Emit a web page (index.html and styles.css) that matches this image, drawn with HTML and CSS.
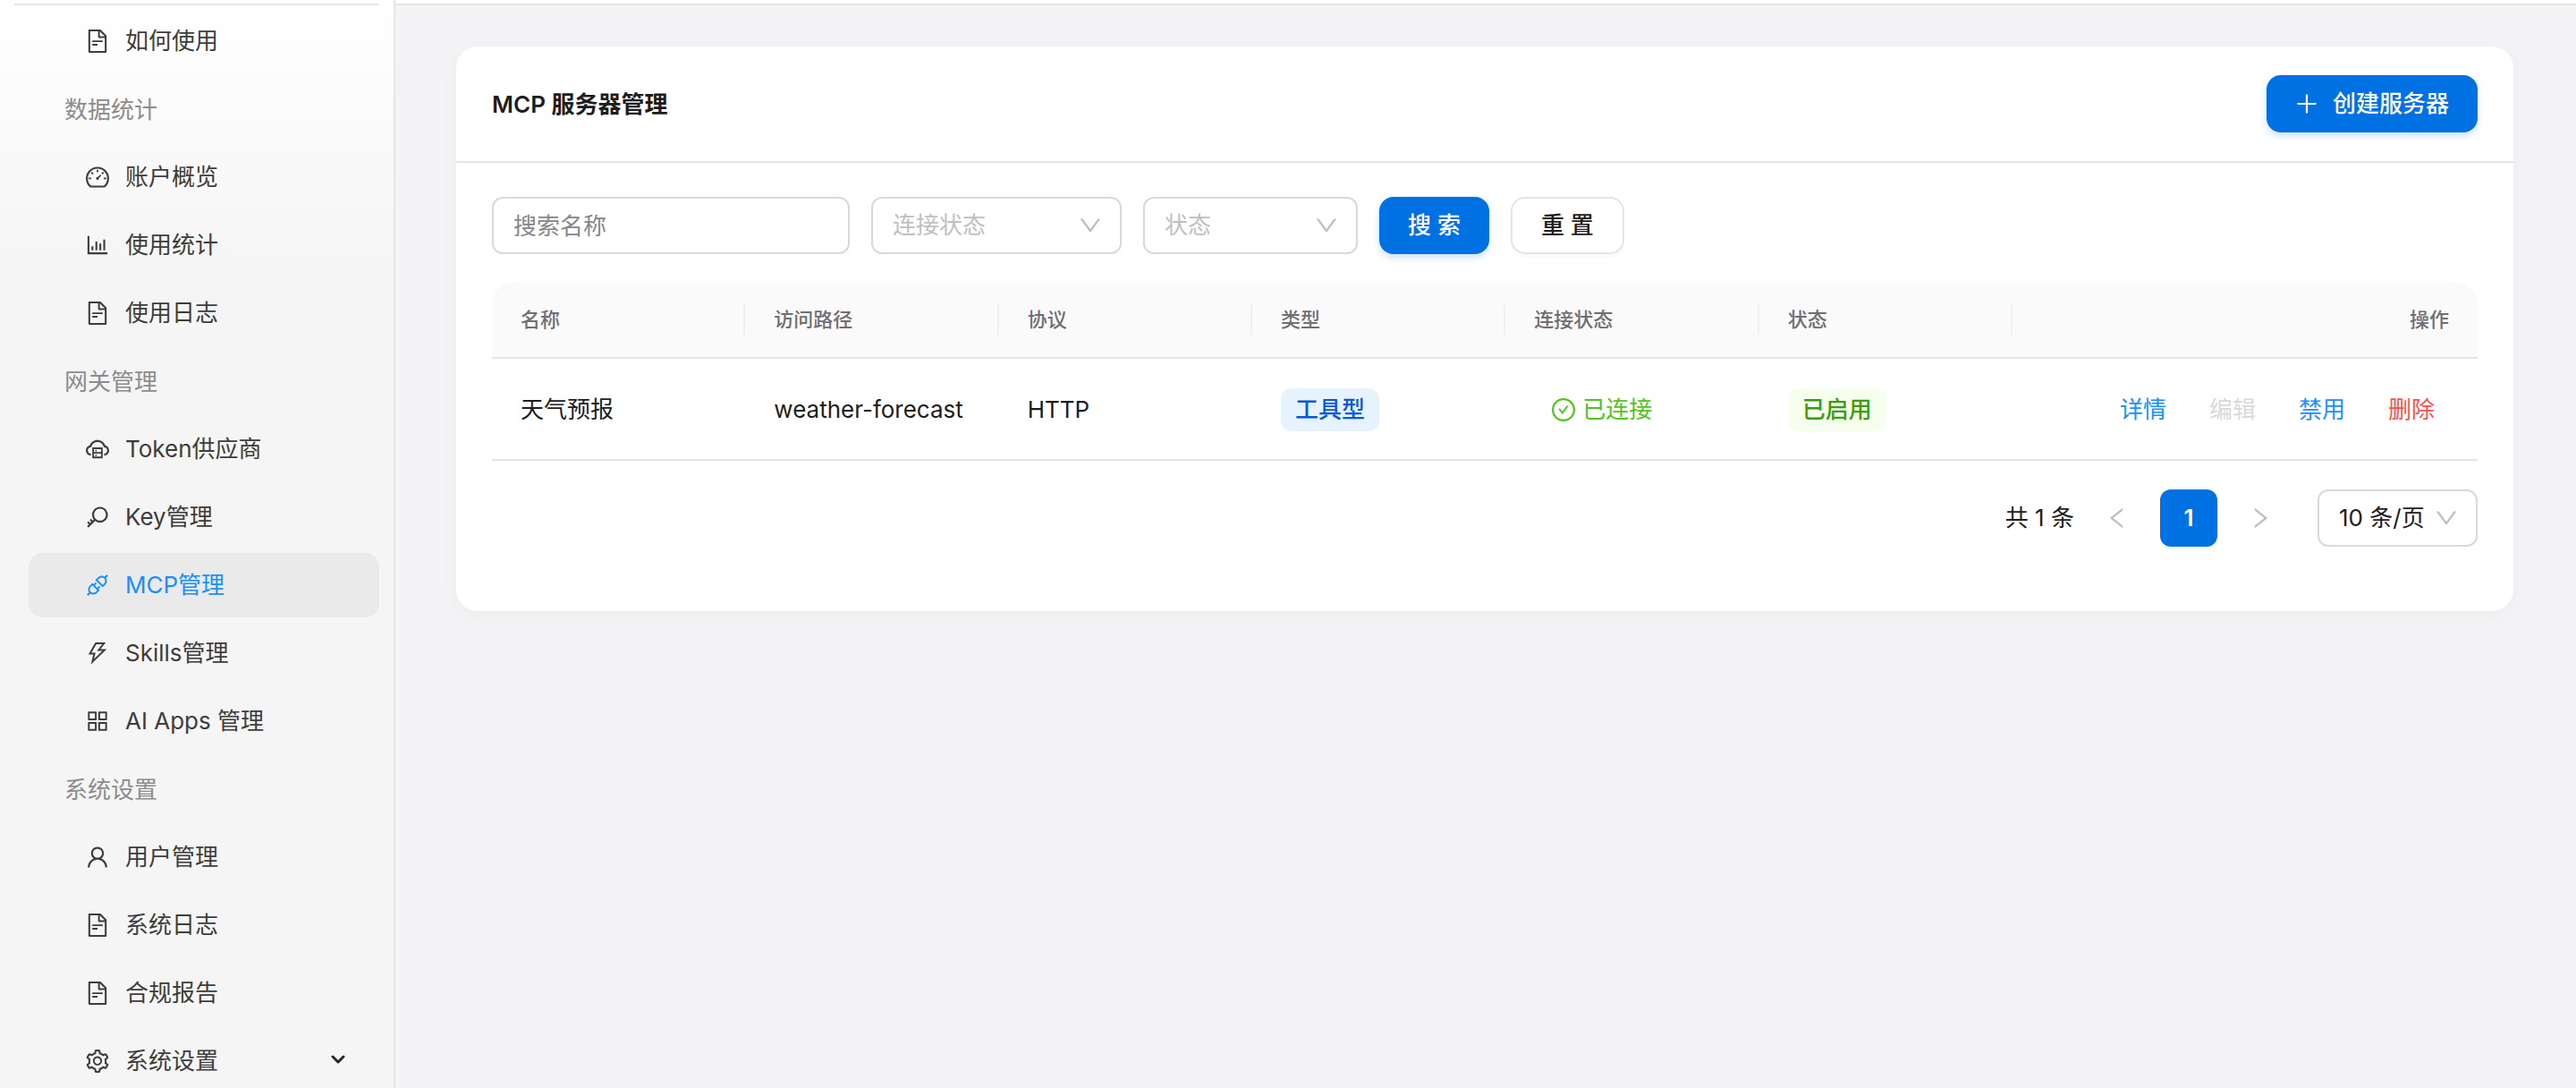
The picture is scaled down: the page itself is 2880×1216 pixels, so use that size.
FILE: index.html
```
<!DOCTYPE html>
<html lang="zh-CN">
<head>
    <meta charset="UTF-8">
    <title>MCP 服务器管理</title>
    <link rel="stylesheet" href="styles.css">
</head>
<body>
    <!-- 图标 -->
    <svg class="sprite" aria-hidden="true">
        <symbol id="i-file" viewBox="64 64 896 896"><path d="M854.6 288.6L639.4 73.4c-6-6-14.1-9.4-22.6-9.4H192c-17.7 0-32 14.3-32 32v832c0 17.7 14.3 32 32 32h640c17.7 0 32-14.3 32-32V311.3c0-8.5-3.4-16.7-9.4-22.7zM790.2 326H602V137.8L790.2 326zm1.8 562H232V136h302v216a42 42 0 0042 42h216v494zM504 618H320c-4.4 0-8 3.6-8 8v48c0 4.4 3.6 8 8 8h184c4.4 0 8-3.6 8-8v-48c0-4.4-3.6-8-8-8zM312 490v48c0 4.4 3.6 8 8 8h384c4.4 0 8-3.6 8-8v-48c0-4.4-3.6-8-8-8H320c-4.4 0-8 3.6-8 8z"/></symbol>
        <symbol id="i-dashboard" viewBox="64 64 896 896"><path d="M924.8 385.6a446.7 446.7 0 00-96-142.4 446.7 446.7 0 00-142.4-96C631.1 123.8 572.5 112 512 112s-119.1 11.8-174.4 35.2a446.7 446.7 0 00-142.4 96 446.7 446.7 0 00-96 142.4C75.8 440.9 64 499.5 64 560c0 132.7 58.3 257.7 159.9 343.1l1.7 1.4c5.8 4.8 13.1 7.5 20.6 7.5h531.7c7.5 0 14.8-2.7 20.6-7.5l1.7-1.4C901.7 817.7 960 692.7 960 560c0-60.5-11.9-119.1-35.2-174.4zM761.4 836H262.6A371.12 371.12 0 01140 560c0-99.4 38.7-192.8 109-263 70.3-70.3 163.7-109 263-109 99.4 0 192.8 38.7 263 109 70.3 70.3 109 163.7 109 263 0 105.6-44.5 205.5-122.6 276zM623.5 421.5a8.03 8.03 0 00-11.3 0L527.7 506c-18.7-5-39.4-.2-54.1 14.5a55.95 55.95 0 000 79.2 55.95 55.95 0 0079.2 0 55.87 55.87 0 0014.5-54.1l84.5-84.5c3.1-3.1 3.1-8.2 0-11.3l-28.3-28.3zM490 320h44c4.4 0 8-3.6 8-8v-80c0-4.4-3.6-8-8-8h-44c-4.4 0-8 3.6-8 8v80c0 4.4 3.6 8 8 8zm260 218v44c0 4.4 3.6 8 8 8h80c4.4 0 8-3.6 8-8v-44c0-4.4-3.6-8-8-8h-80c-4.4 0-8 3.6-8 8zm12.7-197.2l-31.1-31.1a8.03 8.03 0 00-11.3 0l-56.6 56.6a8.03 8.03 0 000 11.3l31.1 31.1c3.1 3.1 8.2 3.1 11.3 0l56.6-56.6c3.1-3.1 3.1-8.2 0-11.3zm-458.6-31.1a8.03 8.03 0 00-11.3 0l-31.1 31.1a8.03 8.03 0 000 11.3l56.6 56.6c3.1 3.1 8.2 3.1 11.3 0l31.1-31.1c3.1-3.1 3.1-8.2 0-11.3l-56.6-56.6zM262 530h-80c-4.4 0-8 3.6-8 8v44c0 4.4 3.6 8 8 8h80c4.4 0 8-3.6 8-8v-44c0-4.4-3.6-8-8-8z"/></symbol>
        <symbol id="i-chart" viewBox="64 64 896 896"><path d="M888 792H200V168c0-4.4-3.6-8-8-8h-56c-4.4 0-8 3.6-8 8v688c0 4.4 3.6 8 8 8h752c4.4 0 8-3.6 8-8v-56c0-4.4-3.6-8-8-8zm-600-80h56c4.4 0 8-3.6 8-8V560c0-4.4-3.6-8-8-8h-56c-4.4 0-8 3.6-8 8v144c0 4.4 3.6 8 8 8zm152 0h56c4.4 0 8-3.6 8-8V384c0-4.4-3.6-8-8-8h-56c-4.4 0-8 3.6-8 8v320c0 4.4 3.6 8 8 8zm152 0h56c4.4 0 8-3.6 8-8V462c0-4.4-3.6-8-8-8h-56c-4.4 0-8 3.6-8 8v242c0 4.4 3.6 8 8 8zm152 0h56c4.4 0 8-3.6 8-8V304c0-4.4-3.6-8-8-8h-56c-4.4 0-8 3.6-8 8v400c0 4.4 3.6 8 8 8z"/></symbol>
        <symbol id="i-cloud" viewBox="64 64 896 896"><path d="M704 446H320c-4.4 0-8 3.6-8 8v402c0 4.4 3.6 8 8 8h384c4.4 0 8-3.6 8-8V454c0-4.4-3.6-8-8-8zm-328 64h272v117H376V510zm272 290H376V683h272v117z"/><path d="M424 748a32 32 0 1064 0 32 32 0 10-64 0zm0-178a32 32 0 1064 0 32 32 0 10-64 0z"/><path d="M811.4 368.9C765.6 248 648.9 162 512.2 162S258.8 247.9 213 368.8C126.9 391.5 63.5 470.2 64 563.6 64.6 668 145.6 752.9 247.6 762c4.7.4 8.7-3.3 8.7-8v-60.4c0-4-3-7.4-7-7.9-27-3.4-52.5-15.2-72.1-34.5-24-23.5-37.2-55.1-37.2-88.6 0-28 9.1-54.4 26.2-76.4 16.7-21.4 40.2-36.9 66.1-43.7l37.9-10 13.9-36.7c8.6-22.8 20.6-44.2 35.7-63.5 14.9-19.2 32.6-36 52.4-50 41.1-28.9 89.5-44.2 140-44.2s98.9 15.3 140 44.3c19.9 14 37.5 30.8 52.4 50 15.1 19.3 27.1 40.7 35.7 63.5l13.8 36.6 37.8 10c54.2 14.4 92.1 63.7 92.1 120 0 33.6-13.2 65.1-37.2 88.6-19.5 19.2-44.9 31.1-71.9 34.5-4 .5-6.9 3.9-6.9 7.9V754c0 4.7 4.1 8.4 8.8 8 101.7-9.2 182.5-94 183.2-198.2.6-93.4-62.7-172.1-148.6-194.9z"/></symbol>
        <symbol id="i-key" viewBox="64 64 896 896"><path d="M608 112c-167.9 0-304 136.1-304 304 0 70.3 23.9 135 63.9 186.5l-41.1 41.1-62.3-62.3a8.15 8.15 0 00-11.4 0l-39.8 39.8a8.15 8.15 0 000 11.4l62.3 62.3-44.9 44.9-62.3-62.3a8.15 8.15 0 00-11.4 0l-39.8 39.8a8.15 8.15 0 000 11.4l62.3 62.3-65.3 65.3a8.03 8.03 0 000 11.3l42.3 42.3c3.1 3.1 8.2 3.1 11.3 0l253.6-253.6A304.06 304.06 0 00608 720c167.9 0 304-136.1 304-304S775.9 112 608 112zm161.2 465.2C726.2 620.3 668.9 644 608 644c-60.9 0-118.2-23.7-161.2-66.8-43.1-43-66.8-100.3-66.8-161.2 0-60.9 23.7-118.2 66.8-161.2 43-43.1 100.3-66.8 161.2-66.8 60.9 0 118.2 23.7 161.2 66.8 43.1 43 66.8 100.3 66.8 161.2 0 60.9-23.7 118.2-66.8 161.2z"/></symbol>
        <symbol id="i-api" viewBox="64 64 896 896"><path d="M917.7 148.8l-42.4-42.4c-1.6-1.6-3.6-2.3-5.7-2.3s-4.1.8-5.7 2.3l-76.1 76.1a199.27 199.27 0 00-112.1-34.3c-51.2 0-102.4 19.5-141.5 58.6L432.3 308.7a8.03 8.03 0 000 11.3L704 591.7c1.6 1.6 3.6 2.3 5.7 2.3 2 0 4.1-.8 5.7-2.3l101.9-101.9c68.9-69 77-175.7 24.3-253.5l76.1-76.1c3.1-3.2 3.1-8.3 0-11.4zM769.1 441.7l-59.4 59.4-186.8-186.8 59.4-59.4c24.9-24.9 58.1-38.7 93.4-38.7 35.3 0 68.4 13.7 93.4 38.7 24.9 24.9 38.7 58.1 38.7 93.4 0 35.3-13.8 68.4-38.7 93.4zm-190.2 105a8.03 8.03 0 00-11.3 0L501 613.3 410.7 523l66.7-66.7c3.1-3.1 3.1-8.2 0-11.3L441 408.6a8.03 8.03 0 00-11.3 0L363 475.3l-43-43a7.85 7.85 0 00-5.7-2.3c-2 0-4.1.8-5.7 2.3L206.8 534.2c-68.9 69-77 175.7-24.3 253.5l-76.1 76.1a8.03 8.03 0 000 11.3l42.4 42.4c1.6 1.6 3.6 2.3 5.7 2.3s4.1-.8 5.7-2.3l76.1-76.1c33.7 22.9 72.9 34.3 112.1 34.3 51.2 0 102.4-19.5 141.5-58.6l101.9-101.9c3.1-3.1 3.1-8.2 0-11.3l-43-43 66.7-66.7c3.1-3.1 3.1-8.2 0-11.3l-36.6-36.2zM441.7 769.1a131.32 131.32 0 01-93.4 38.7c-35.3 0-68.4-13.7-93.4-38.7a131.32 131.32 0 01-38.7-93.4c0-35.3 13.7-68.4 38.7-93.4l59.4-59.4 186.8 186.8-59.4 59.4z"/></symbol>
        <symbol id="i-bolt" viewBox="64 64 896 896"><path d="M848 359.3H627.7L825.8 109c4.1-5.3.4-13-6.3-13H436c-2.8 0-5.5 1.5-6.9 4L170 547.5c-3.1 5.3.7 12 6.9 12h174.4l-89.4 357.6c-1.9 7.8 7.5 13.3 13.3 7.7L853.5 373c5.2-4.9 1.7-13.7-5.5-13.7zM378.2 732.5l60.3-241H281.1l189.6-327.4h224.6L487 427.4h211L378.2 732.5z"/></symbol>
        <symbol id="i-apps" viewBox="64 64 896 896"><path d="M464 144H160c-8.8 0-16 7.2-16 16v304c0 8.8 7.2 16 16 16h304c8.8 0 16-7.2 16-16V160c0-8.8-7.2-16-16-16zm-52 268H212V212h200v200zm452-268H560c-8.8 0-16 7.2-16 16v304c0 8.8 7.2 16 16 16h304c8.8 0 16-7.2 16-16V160c0-8.8-7.2-16-16-16zm-52 268H612V212h200v200zM464 544H160c-8.8 0-16 7.2-16 16v304c0 8.8 7.2 16 16 16h304c8.8 0 16-7.2 16-16V560c0-8.8-7.2-16-16-16zm-52 268H212V612h200v200zm452-268H560c-8.8 0-16 7.2-16 16v304c0 8.8 7.2 16 16 16h304c8.8 0 16-7.2 16-16V560c0-8.8-7.2-16-16-16zm-52 268H612V612h200v200z"/></symbol>
        <symbol id="i-user" viewBox="64 64 896 896"><path d="M858.5 763.6a374 374 0 00-80.6-119.5 375.63 375.63 0 00-119.5-80.6c-.4-.2-.8-.3-1.2-.5C719.5 518 760 444.7 760 362c0-137-111-248-248-248S264 225 264 362c0 82.7 40.5 156 102.8 201.1-.4.2-.8.3-1.2.5-44.8 18.9-85 46-119.5 80.6a375.63 375.63 0 00-80.6 119.5A371.7 371.7 0 00136 901.8a8 8 0 008 8.2h60c4.4 0 7.9-3.5 8-7.8 2-77.2 33-149.5 87.8-204.3 56.7-56.7 132-87.9 212.2-87.9s155.5 31.2 212.2 87.9C779 752.7 810 825 812 902.2c.1 4.4 3.6 7.8 8 7.8h60a8 8 0 008-8.2c-1-47.8-10.9-94.3-29.5-138.2zM512 534c-45.9 0-89.1-17.9-121.6-50.4S340 407.9 340 362c0-45.9 17.9-89.1 50.4-121.6S466.1 190 512 190s89.1 17.9 121.6 50.4S684 316.1 684 362c0 45.9-17.9 89.1-50.4 121.6S557.9 534 512 534z"/></symbol>
        <symbol id="i-setting" viewBox="64 64 896 896"><path d="M924.8 625.7l-65.5-56c3.1-19 4.7-38.4 4.7-57.8s-1.6-38.8-4.7-57.8l65.5-56a32.03 32.03 0 009.3-35.2l-.9-2.6a443.74 443.74 0 00-79.7-137.9l-1.8-2.1a32.12 32.12 0 00-35.1-9.5l-81.3 28.9c-30-24.6-63.5-44-99.7-57.6l-15.7-85a32.05 32.05 0 00-25.8-25.7l-2.7-.5c-52.1-9.4-106.9-9.4-159 0l-2.7.5a32.05 32.05 0 00-25.8 25.7l-15.8 85.4a351.86 351.86 0 00-99 57.4l-81.9-29.1a32 32 0 00-35.1 9.5l-1.8 2.1a446.02 446.02 0 00-79.7 137.9l-.9 2.6c-4.5 12.5-.8 26.5 9.3 35.2l66.3 56.6c-3.1 18.8-4.6 38-4.6 57.1 0 19.2 1.5 38.4 4.6 57.1L99 625.5a32.03 32.03 0 00-9.3 35.2l.9 2.6c18.1 50.4 44.9 96.9 79.7 137.9l1.8 2.1a32.12 32.12 0 0035.1 9.5l81.9-29.1c29.8 24.5 63.1 43.9 99 57.4l15.8 85.4a32.05 32.05 0 0025.8 25.7l2.7.5a449.4 449.4 0 00159 0l2.7-.5a32.05 32.05 0 0025.8-25.7l15.7-85a350 350 0 0099.7-57.6l81.3 28.9a32 32 0 0035.1-9.5l1.8-2.1c34.8-41.1 61.6-87.5 79.7-137.9l.9-2.6c4.5-12.3.8-26.3-9.3-35zM788.3 465.9c2.5 15.1 3.8 30.6 3.8 46.1s-1.3 31-3.8 46.1l-6.6 40.1 74.7 63.9a370.03 370.03 0 01-42.6 73.6L721 702.8l-31.4 25.8c-23.9 19.6-50.5 35-79.3 45.8l-38.1 14.3-17.9 97a377.5 377.5 0 01-85 0l-17.9-97.2-37.8-14.5c-28.5-10.8-55-26.2-78.7-45.7l-31.4-25.9-93.4 33.2c-17-22.9-31.2-47.6-42.6-73.6l75.5-64.5-6.5-40c-2.4-14.9-3.7-30.3-3.7-45.5 0-15.3 1.2-30.6 3.7-45.5l6.5-40-75.5-64.5c11.3-26.1 25.6-50.7 42.6-73.6l93.4 33.2 31.4-25.9c23.7-19.5 50.2-34.9 78.7-45.7l37.9-14.3 17.9-97.2c28.1-3.2 56.8-3.2 85 0l17.9 97 38.1 14.3c28.7 10.8 55.4 26.2 79.3 45.8l31.4 25.8 92.8-32.9c17 22.9 31.2 47.6 42.6 73.6L781.8 426l6.5 39.9zM512 326c-97.2 0-176 78.8-176 176s78.8 176 176 176 176-78.8 176-176-78.8-176-176-176zm79.2 255.2A111.6 111.6 0 01512 614c-29.9 0-58-11.7-79.2-32.8A111.6 111.6 0 01400 502c0-29.9 11.7-58 32.8-79.2C454 401.6 482.1 390 512 390c29.9 0 58 11.6 79.2 32.8A111.6 111.6 0 01624 502c0 29.9-11.7 58-32.8 79.2z"/></symbol>
        <symbol id="i-plus" viewBox="64 64 896 896"><path d="M482 152h60q8 0 8 8v704q0 8-8 8h-60q-8 0-8-8V160q0-8 8-8z"/><path d="M160 474h704q8 0 8 8v60q0 8-8 8H160q-8 0-8-8v-60q0-8 8-8z"/></symbol>
        <symbol id="i-down" viewBox="64 64 896 896"><path d="M884 256h-75c-5.1 0-9.9 2.5-12.9 6.6L512 654.2 227.9 262.6c-3-4.1-7.8-6.6-12.9-6.6h-75c-6.5 0-10.3 7.4-6.5 12.7l352.6 486.1c12.8 17.6 39 17.6 51.7 0l352.6-486.1c3.9-5.3.1-12.7-6.4-12.7z"/></symbol>
        <symbol id="i-left" viewBox="64 64 896 896"><path d="M724 218.3V141c0-6.7-7.7-10.4-12.9-6.3L260.3 486.8a31.86 31.86 0 000 50.3l450.8 352.1c5.3 4.1 12.9.4 12.9-6.3v-77.3c0-4.9-2.3-9.6-6.1-12.6l-360-281 360-281.1c3.8-3 6.1-7.7 6.1-12.6z"/></symbol>
        <symbol id="i-right" viewBox="64 64 896 896"><path d="M765.7 486.8L314.9 134.7A7.97 7.97 0 00302 141v77.3c0 4.9 2.3 9.6 6.1 12.6l360 281.1-360 281.1c-3.9 3-6.1 7.7-6.1 12.6V883c0 6.7 7.7 10.4 12.9 6.3l450.8-352.1a31.96 31.96 0 000-50.4z"/></symbol>
        <symbol id="i-check" viewBox="64 64 896 896"><path d="M699 353h-46.9c-10.2 0-19.9 4.9-25.9 13.3L469 584.3l-71.2-98.8c-6-8.3-15.6-13.3-25.9-13.3H325c-6.5 0-10.3 7.4-6.5 12.7l124.6 172.8a31.8 31.8 0 0051.7 0l210.6-292c3.9-5.3.1-12.7-6.4-12.7z"/><path d="M512 64C264.6 64 64 264.6 64 512s200.6 448 448 448 448-200.6 448-448S759.4 64 512 64zm0 820c-205.4 0-372-166.6-372-372s166.6-372 372-372 372 166.6 372 372-166.6 372-372 372z"/></symbol>
    </svg>

    <div class="layout">
        <nav class="sidebar">
            <ul class="menu">
                <li><a href="#" class="menu-item"><svg class="icon"><use href="#i-file"/></svg>如何使用</a></li>
                <li class="menu-group">数据统计</li>
                <li><a href="#" class="menu-item"><svg class="icon"><use href="#i-dashboard"/></svg>账户概览</a></li>
                <li><a href="#" class="menu-item"><svg class="icon"><use href="#i-chart"/></svg>使用统计</a></li>
                <li><a href="#" class="menu-item"><svg class="icon"><use href="#i-file"/></svg>使用日志</a></li>
                <li class="menu-group">网关管理</li>
                <li><a href="#" class="menu-item"><svg class="icon"><use href="#i-cloud"/></svg>Token供应商</a></li>
                <li><a href="#" class="menu-item"><svg class="icon"><use href="#i-key"/></svg>Key管理</a></li>
                <li><a href="#" class="menu-item active"><svg class="icon"><use href="#i-api"/></svg>MCP管理</a></li>
                <li><a href="#" class="menu-item"><svg class="icon"><use href="#i-bolt"/></svg>Skills管理</a></li>
                <li><a href="#" class="menu-item"><svg class="icon"><use href="#i-apps"/></svg>AI Apps 管理</a></li>
                <li class="menu-group">系统设置</li>
                <li><a href="#" class="menu-item"><svg class="icon"><use href="#i-user"/></svg>用户管理</a></li>
                <li><a href="#" class="menu-item"><svg class="icon"><use href="#i-file"/></svg>系统日志</a></li>
                <li><a href="#" class="menu-item"><svg class="icon"><use href="#i-file"/></svg>合规报告</a></li>
                <li><a href="#" class="menu-item"><svg class="icon"><use href="#i-setting"/></svg>系统设置<svg class="menu-arrow" viewBox="0 0 20 20"><path d="M4 5l6 6 6-6"/></svg></a></li>
            </ul>
        </nav>

        <main class="content">
            <section class="card">
                <header class="card-head">
                    <h1>MCP 服务器管理</h1>
                    <button type="button" class="btn btn-primary"><svg class="icon"><use href="#i-plus"/></svg>创建服务器</button>
                </header>

                <div class="card-body">
                    <form class="filters">
                        <input type="text" class="field search-name" placeholder="搜索名称" aria-label="搜索名称">
                        <div class="select select-conn">
                            <select class="field empty" aria-label="连接状态"><option>连接状态</option></select>
                            <svg class="icon"><use href="#i-down"/></svg>
                        </div>
                        <div class="select select-status">
                            <select class="field empty" aria-label="状态"><option>状态</option></select>
                            <svg class="icon"><use href="#i-down"/></svg>
                        </div>
                        <button type="button" class="btn btn-primary">搜 索</button>
                        <button type="button" class="btn btn-default">重 置</button>
                    </form>

                    <table class="table">
                        <thead>
                            <tr>
                                <th>名称</th>
                                <th>访问路径</th>
                                <th>协议</th>
                                <th>类型</th>
                                <th>连接状态</th>
                                <th>状态</th>
                                <th class="col-action">操作</th>
                            </tr>
                        </thead>
                        <tbody>
                            <tr>
                                <td>天气预报</td>
                                <td>weather-forecast</td>
                                <td>HTTP</td>
                                <td><span class="tag tag-blue">工具型</span></td>
                                <td><span class="conn"><svg class="icon"><use href="#i-check"/></svg>已连接</span></td>
                                <td><span class="tag tag-green">已启用</span></td>
                                <td class="col-action">
                                    <div class="actions">
                                        <button type="button" class="link">详情</button>
                                        <button type="button" class="link" disabled>编辑</button>
                                        <button type="button" class="link">禁用</button>
                                        <button type="button" class="link danger">删除</button>
                                    </div>
                                </td>
                            </tr>
                        </tbody>
                    </table>

                    <div class="pagination">
                        <span class="total">共 1 条</span>
                        <button type="button" class="page" aria-label="上一页" disabled><svg class="icon"><use href="#i-left"/></svg></button>
                        <button type="button" class="page current">1</button>
                        <button type="button" class="page" aria-label="下一页" disabled><svg class="icon"><use href="#i-right"/></svg></button>
                        <div class="select select-size">
                            <select class="field" aria-label="每页条数"><option>10 条/页</option></select>
                            <svg class="icon"><use href="#i-down"/></svg>
                        </div>
                    </div>
                </div>
            </section>
        </main>
    </div>
</body>
</html>
```
FILE: styles.css
```
* { box-sizing: border-box; }
body { margin: 0; height: 100vh; overflow: hidden; background: #fff; color: #1d1d1f; font: 26px/40px Inter, "Noto Sans CJK SC", sans-serif; }
button, input, select { font: inherit; color: inherit; margin: 0; }
button { cursor: pointer; }
button:disabled { cursor: default; }
.sprite { display: none; }
.icon { width: 26px; height: 26px; flex: none; fill: currentColor; }

.layout { display: flex; height: 100vh; }

/* 侧边栏 */
.sidebar { width: 442px; flex: none; overflow: hidden; padding: 4px 16px 0; border-right: 2px solid #e5e5e7; background: linear-gradient(#fff, #f5f5f5 300px); }
.menu { list-style: none; margin: 0; padding: 6px 0 0 16px; position: relative; }
.menu::before { content: ""; position: absolute; top: 0; left: 0; right: 0; height: 2px; background: #e5e5e5; }
.menu li { height: 72px; margin-bottom: 4px; }
.menu-item { display: flex; align-items: center; gap: 18px; height: 72px; padding: 0 36px 0 64px; border-radius: 16px; color: #3d3d3d; text-decoration: none; }
.menu-item.active { background: #eaeaea; color: #1890ff; }
.menu-group { padding-left: 40px; color: #8c8c8c; line-height: 74px; }
.menu-arrow { width: 20px; height: 20px; margin-left: auto; fill: none; stroke: #262626; stroke-width: 3; stroke-linecap: round; stroke-linejoin: round; }

/* 内容区 */
.content { flex: 1; min-width: 0; padding: 46px 70px 0 68px; border-top: 2px solid #e5e5e7; margin-top: 4px; background: #f4f4f7; }
.card { background: #fff; border-radius: 24px; box-shadow: 0 4px 24px rgba(0, 0, 0, 0.04); }
.card-head { display: flex; align-items: center; justify-content: space-between; padding: 32px 40px; border-bottom: 2px solid #e5e5e5; }
.card-head h1 { margin: 0; font-size: 26px; font-weight: 600; line-height: 40px; padding-top: 2px; }
.card-body { padding: 38px 40px 72px; }

.btn { display: flex; align-items: center; gap: 16px; height: 64px; padding: 0 32px; border: 0; border-radius: 16px; font-weight: 500; }
.btn-primary { background: #0071e3; color: #fff; box-shadow: 0 4px 8px rgba(0, 113, 227, 0.2); }
.btn-default { background: #fff; border: 2px solid #e5e5e5; box-shadow: 0 4px 0 rgba(0, 0, 0, 0.02); }

/* 筛选 */
.filters { display: flex; gap: 24px; margin-bottom: 32px; }
.field { width: 100%; height: 64px; padding: 0 22px; border: 2px solid #d9d9d9; border-radius: 12px; background: #fff; outline: none; appearance: none; }
.field::placeholder { color: #86868b; opacity: 1; }
.field.empty { color: #bfbfbf; }
.search-name { width: 400px; }
.select { position: relative; }
.select .icon { position: absolute; top: 19px; right: 22px; color: #bfbfbf; pointer-events: none; }
.select-conn { width: 280px; }
.select-status { width: 240px; }

/* 表格 */
.table { width: 100%; table-layout: fixed; border-collapse: separate; border-spacing: 0; }
.table th, .table td { padding: 0 32px; text-align: left; border-bottom: 2px solid #e5e5e5; }
.table th { position: relative; height: 85px; padding-bottom: 2px; background: #fafafa; color: #6e6e73; font-size: 22px; font-weight: 500; }
.table td { height: 114px; padding-top: 1px; }
.table th:first-child { border-top-left-radius: 24px; }
.table th:last-child { border-top-right-radius: 24px; }
.table th:not(:last-child)::after { content: ""; position: absolute; top: 23px; right: 0; width: 2px; height: 35px; background: #f0f0f0; }
.table .col-action { width: 520px; text-align: right; }
.tag { display: inline-block; height: 48px; padding: 0 16px; border-radius: 12px; line-height: 48px; font-weight: 500; vertical-align: middle; }
.tag-blue { background: #e6f3ff; color: #0958d9; }
.tag-green { background: #f6ffed; color: #389e0d; }
.conn { display: flex; align-items: center; gap: 8px; padding-left: 20px; color: #52c41a; }
.actions { display: flex; justify-content: flex-end; gap: 16px; }
.link { padding: 0 16px; border: 0; background: none; color: #1890ff; }
.link:disabled { color: #d9d9d9; }
.link.danger { color: #ff4d4f; }

/* 分页 */
.pagination { display: flex; align-items: center; justify-content: flex-end; gap: 16px; margin-top: 32px; }
.page { display: flex; align-items: center; justify-content: center; width: 64px; height: 64px; padding: 0; border: 0; border-radius: 12px; background: none; color: #bfbfbf; }
.page.current { background: #0071e3; color: #fff; font-weight: 600; }
.select-size { width: 179px; margin-left: 16px; }
```
